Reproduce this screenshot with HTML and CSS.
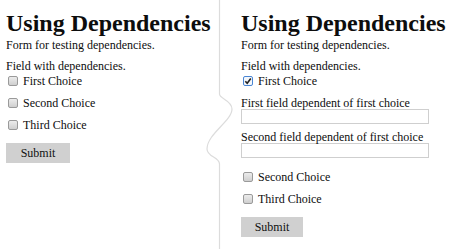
FILE: index.html
```html
<!DOCTYPE html>
<html>
<head>
<meta charset="utf-8">
<link rel="stylesheet" href="styles.css">
</head>
<body>
<div class="page">
  <section class="panel left">
    <h1 class="title">Using Dependencies</h1>
    <p class="desc">Form for testing dependencies.</p>
    <div class="field-label">Field with dependencies.</div>
    <div class="choice"><span class="cb"></span><span>First Choice</span></div>
    <div class="choice"><span class="cb"></span><span>Second Choice</span></div>
    <div class="choice"><span class="cb"></span><span>Third Choice</span></div>
    <div class="submit">Submit</div>
  </section>
  <svg class="divider" width="30" height="249" viewBox="0 0 30 249">
    <path d="M14.5 0 V94 C14.5 99 27 100 27 109 C27 121 2 134 2 149 C2 157 14.5 157 14.5 164 V249" fill="none" stroke="#dcdcdc" stroke-width="1.2"/>
  </svg>
  <section class="panel right">
    <h1 class="title">Using Dependencies</h1>
    <p class="desc">Form for testing dependencies.</p>
    <div class="field-label">Field with dependencies.</div>
    <div class="choice"><span class="cb checked"><svg width="8" height="8" viewBox="0 0 8 8"><path d="M1.3 4.2 L3.2 6.2 L6.8 1.5" fill="none" stroke="#222" stroke-width="1.6"/></svg></span><span>First Choice</span></div>
    <div class="dep">
      <div class="dep-label">First field dependent of first choice</div>
      <div class="text-input"></div>
    </div>
    <div class="dep">
      <div class="dep-label">Second field dependent of first choice</div>
      <div class="text-input"></div>
    </div>
    <div class="choice after-dep"><span class="cb"></span><span>Second Choice</span></div>
    <div class="choice"><span class="cb"></span><span>Third Choice</span></div>
    <div class="submit">Submit</div>
  </section>
</div>
</body>
</html>
```
FILE: styles.css
```css
html, body {
  margin: 0;
  padding: 0;
  background: #fff;
}
body {
  width: 450px;
  height: 249px;
  overflow: hidden;
  font-family: "Liberation Serif", "Times New Roman", serif;
  font-size: 12px;
  line-height: 14px;
  color: #0d0d0d;
}
.page {
  display: flex;
  height: 249px;
}
.panel {
  box-sizing: border-box;
  padding-top: 9px;
  padding-left: 6px;
}
.panel.left {
  width: 205px;
  flex: none;
}
.panel.right {
  flex: 1;
}
.divider {
  flex: none;
  display: block;
}
.title {
  margin: 0;
  font-size: 24px;
  line-height: 29px;
  font-weight: bold;
  white-space: nowrap;
}
.desc {
  margin: 0 0 7px 0;
}
.field-label {
  margin-bottom: 1px;
}
.choice {
  display: flex;
  align-items: center;
  height: 14px;
  margin-bottom: 8px;
}
.cb {
  box-sizing: border-box;
  width: 10px;
  height: 10px;
  margin: 0 5px 0 2px;
  border: 1px solid #9a9a9a;
  border-radius: 2px;
  background: linear-gradient(#ececec, #cfcfcf);
  display: flex;
  align-items: center;
  justify-content: center;
}
.cb.checked {
  border-color: #4a86d4;
  background: #f4f7fb;
}
.cb svg {
  display: block;
}
.dep {
  margin-bottom: 6px;
}
.dep-label {
  height: 14px;
  margin-bottom: -1px;
}
.text-input {
  box-sizing: border-box;
  width: 188px;
  height: 15px;
  border: 1px solid #cfcfcf;
  background: #fff;
}
.after-dep {
  margin-top: 12px;
}
.submit {
  margin-top: 11px;
  width: 64px;
  height: 20px;
  background: #d0d0d0;
  display: flex;
  align-items: center;
  justify-content: center;
  color: #111;
}
.right .submit {
  width: 62px;
}
```
